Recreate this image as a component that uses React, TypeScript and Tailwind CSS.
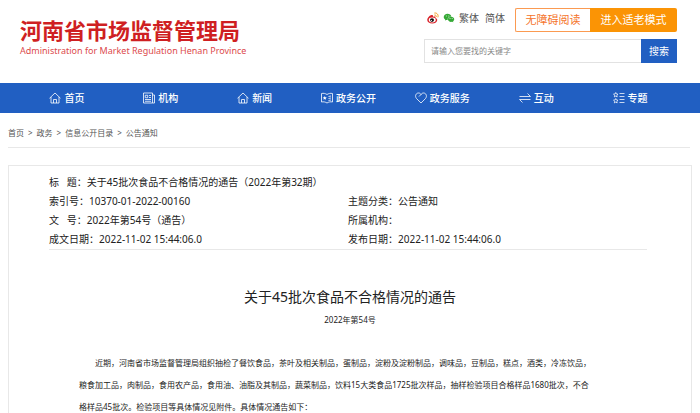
import type { ReactNode } from "react";
import { AiFillWechat } from "react-icons/ai";

const stroke = {
  width: 12,
  height: 12,
  viewBox: "0 0 24 24",
  fill: "none",
  stroke: "currentColor",
  strokeWidth: 1.6,
  "aria-hidden": true,
} as const;

const HomeIcon = () => (
  <svg {...stroke}>
    <path d="M1 12.5 12 2l11 10.5M4 10v12h16V10M9 22v-7h6v7" />
  </svg>
);
const NewspaperIcon = () => (
  <svg {...stroke}>
    <path d="M1 2h18v20H1zM19 6h4v16h-4M4.5 6.5h5v5h-5zM12 7h4M12 11h4M4 15h12M4 18.5h12" />
  </svg>
);
const BookIcon = () => (
  <svg {...stroke}>
    <path d="M1 3c4-1 8 0 11 2 3-2 7-3 11-2v17c-4-1-8 0-11 2-3-2-7-3-11-2zM15 9l5-1M15 13l5-1M15 17l5-1" />
    <path d="m7.5 8 1.2 2.7 2.8.3-2.1 1.9.6 2.8-2.5-1.5L5 15.7l.6-2.8L3.5 11l2.800-.3z" fill="currentColor" stroke="none" />
  </svg>
);
const HeartIcon = () => (
  <svg {...stroke}>
    <path d="M12 22 3 13C-1 8 2 2 7 2c3 0 4 1.5 5 3 1-1.5 2.5-3 5-3 5 0 8 6 4 11zM12 5 8 9" />
  </svg>
);
const ExchangeIcon = () => (
  <svg {...stroke}>
    <path d="M1 9h22l-6-6M23 15H1l6 6" />
  </svg>
);
const StarListIcon = () => (
  <svg {...stroke} strokeWidth={1.5}>
    <path d="m5.5 1 1.4 3 3.1.4-2.3 2.2.6 3.2-2.8-1.6-2.8 1.6.6-3.2L1 4.4 4.1 4zM5.5 13l1.4 3 3.1.4-2.3 2.2.6 3.2-2.8-1.6-2.8 1.6.6-3.2L1 16.4l3.1-.4zM13 3h10M13 9h10M13 15h10M13 21h10" />
  </svg>
);
const WeiboIcon = () => (
  <svg width="12" height="12" viewBox="0 0 24 24" aria-hidden="true">
    <path d="M9 6C6 6.5.5 11.5.5 16c0 4 4.5 7 10 7 6 0 10-3.5 10-7 0-2.5-1.8-3.5-3.5-4 .8-3-1.5-4-5-2.5C12.5 7 11.5 5.6 9 6z" fill="#d9232b" />
    <ellipse cx="10.5" cy="16" rx="7" ry="4.8" fill="#fff" />
    <ellipse cx="10" cy="16.2" rx="4" ry="3.6" fill="#111" />
    <circle cx="8.8" cy="17" r="1.2" fill="#fff" />
    <path d="M15.5 2c4.5-.8 8 3.5 6.5 8M15.5 6c2-.3 3.5 1.2 3 3.2" fill="none" stroke="#f39a1e" strokeWidth="2" strokeLinecap="round" />
  </svg>
);

const navItems: { label: string; icon: ReactNode }[] = [
  { label: "首页", icon: <HomeIcon /> },
  { label: "机构", icon: <NewspaperIcon /> },
  { label: "新闻", icon: <HomeIcon /> },
  { label: "政务公开", icon: <BookIcon /> },
  { label: "政务服务", icon: <HeartIcon /> },
  { label: "互动", icon: <ExchangeIcon /> },
  { label: "专题", icon: <StarListIcon /> },
];

const crumbs = ["首页", "政务", "信息公开目录", "公告通知"];

const bodyLines = [
  "近期，河南省市场监督管理局组织抽检了餐饮食品，茶叶及相关制品，蛋制品，淀粉及淀粉制品，调味品，豆制品，糕点，酒类，冷冻饮品，",
  "粮食加工品，肉制品，食用农产品，食用油、油脂及其制品，蔬菜制品，饮料15大类食品1725批次样品，抽样检验项目合格样品1680批次，不合",
  "格样品45批次。检验项目等具体情况见附件。具体情况通告如下：",
];

export default function App() {
  return (
    <div className="h-screen overflow-hidden bg-white font-['Noto_Sans','Noto_Sans_CJK_SC',sans-serif] text-[10px] text-[#222]">
      <header className="flex items-start justify-between pt-2 pr-[23px] pb-5 pl-5">
        <div className="pt-2 text-[#cf1f22]">
          <h1 className="text-[22px] leading-[28px] font-bold">河南省市场监督管理局</h1>
          <p className="text-[9px] leading-[14px] text-[#dc4a4c]">Administration for Market Regulation Henan Province</p>
        </div>
        <div className="w-[253px]">
          <div className="flex h-6 items-center justify-end">
            <div className="mr-[10px] flex items-center gap-1 pb-1 text-[#555]">
              <a href="#weibo" aria-label="微博"><WeiboIcon /></a>
              <a href="#wechat" aria-label="微信"><AiFillWechat className="size-3 text-[#35a936]" /></a>
              <a href="#traditional">繁体</a>
              <a href="#simplified" className="ml-[2px]">简体</a>
            </div>
            <button className="h-6 w-[75px] rounded-l-xs border border-r-0 border-[#fb9a51] text-[11px] text-[#f5732a]">无障碍阅读</button>
            <button className="h-6 w-[87px] rounded-r-xs bg-[#fb9405] text-[11px] text-white">进入适老模式</button>
          </div>
          <form className="mt-[7px] flex h-6" onSubmit={(e) => e.preventDefault()}>
            <input
              aria-label="搜索关键字"
              placeholder="请输入您要找的关键字"
              className="min-w-0 flex-1 border border-r-0 border-[#e2e2e2] px-[6px] text-[8px] placeholder:text-[#888]"
            />
            <button className="w-9 bg-[#215fc2] text-[10px] text-white">搜索</button>
          </form>
        </div>
      </header>

      <nav className="grid h-[30px] grid-cols-7 bg-[#215fc2] pr-[23px] pl-5 font-medium text-white">
        {navItems.map((item) => (
          <a key={item.label} href="#nav" className="flex items-center justify-center gap-[3px]">
            {item.icon}
            {item.label}
          </a>
        ))}
      </nav>

      <main className="px-2">
        <ol className="mr-[2px] flex h-[35px] items-center gap-1 border-b border-[#e8e8e8] pt-[5px] text-[8px] text-[#555]">
          {crumbs.map((crumb, i) => (
            <li key={crumb} className="flex gap-1">
              {i > 0 && <span>&gt;</span>}
              <a href="#crumb">{crumb}</a>
            </li>
          ))}
        </ol>

        <article className="mt-[17px] border border-[#e8e8e8] px-10 pt-[7px] pb-10">
          <dl className="mr-1 grid grid-cols-2 border-b border-[#e8e8e8] leading-[19px]">
            <div className="col-span-2 flex">
              <dt className="whitespace-pre">标   题：</dt>
              <dd>关于45批次食品不合格情况的通告（2022年第32期）</dd>
            </div>
            <div className="flex"><dt>索引号：</dt><dd>10370-01-2022-00160</dd></div>
            <div className="flex"><dt>主题分类：</dt><dd>公告通知</dd></div>
            <div className="flex"><dt className="whitespace-pre">文   号：</dt><dd>2022年第54号（通告）</dd></div>
            <div className="flex"><dt>所属机构：</dt><dd /></div>
            <div className="flex"><dt>成文日期：</dt><dd>2022-11-02 15:44:06.0</dd></div>
            <div className="flex"><dt>发布日期：</dt><dd>2022-11-02 15:44:06.0</dd></div>
          </dl>

          <h2 className="mt-[35px] text-center text-[14px] leading-6">关于45批次食品不合格情况的通告</h2>
          <p className="mt-[3px] text-center text-[8px] leading-4">2022年第54号</p>

          <p className="mt-6 ml-[30px] indent-4 text-[8px] leading-[22px] whitespace-nowrap">
            {bodyLines.map((line) => (
              <span key={line}>
                {line}
                <br />
              </span>
            ))}
          </p>
        </article>
      </main>
    </div>
  );
}
